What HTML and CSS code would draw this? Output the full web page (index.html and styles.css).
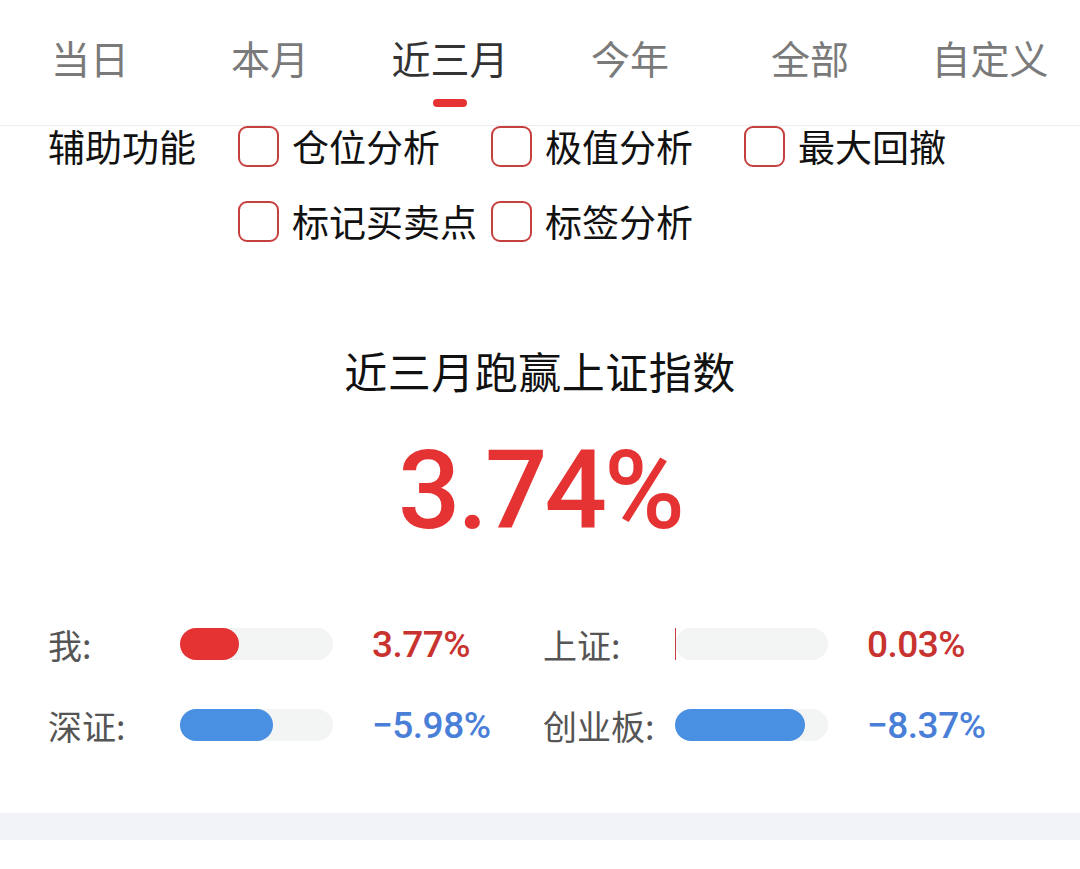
FILE: index.html
```html
<!DOCTYPE html>
<html lang="zh">
<head>
<meta charset="utf-8">
<link rel="stylesheet" href="styles.css">
</head>
<body>
<div class="page">
  <nav class="tabs">
    <div class="tab">当日</div>
    <div class="tab">本月</div>
    <div class="tab active">近三月<span class="indicator"></span></div>
    <div class="tab">今年</div>
    <div class="tab">全部</div>
    <div class="tab">自定义</div>
  </nav>

  <section class="aux">
    <div class="aux-label">辅助功能</div>
    <div class="aux-grid">
      <label class="opt"><span class="box"></span>仓位分析</label>
      <label class="opt"><span class="box"></span>极值分析</label>
      <label class="opt"><span class="box"></span>最大回撤</label>
      <label class="opt"><span class="box"></span>标记买卖点</label>
      <label class="opt"><span class="box"></span>标签分析</label>
    </div>
  </section>

  <section class="summary">
    <div class="summary-title">近三月跑赢上证指数</div>
    <div class="summary-value">3.74%</div>
  </section>

  <section class="stats">
    <div class="stat">
      <span class="stat-label">我:</span>
      <span class="track"><span class="fill up" style="width:59px"></span></span>
      <span class="stat-value up">3.77%</span>
    </div>
    <div class="stat">
      <span class="stat-label">上证:</span>
      <span class="track"><span class="fill up thin" style="width:1px"></span></span>
      <span class="stat-value up">0.03%</span>
    </div>
    <div class="stat">
      <span class="stat-label">深证:</span>
      <span class="track"><span class="fill down" style="width:93px"></span></span>
      <span class="stat-value down">−5.98%</span>
    </div>
    <div class="stat">
      <span class="stat-label">创业板:</span>
      <span class="track"><span class="fill down" style="width:130px"></span></span>
      <span class="stat-value down">−8.37%</span>
    </div>
  </section>

  <div class="band"></div>
</div>
</body>
</html>
```

FILE: styles.css
```css
* { box-sizing: border-box; }
html, body { margin: 0; padding: 0; background: #fff; }
body {
  font-family: "Noto Sans CJK SC", "Noto Sans", sans-serif;
  width: 1080px;
  height: 869px;
  overflow: hidden;
}
.page { display: flex; flex-direction: column; }

.tabs {
  display: grid;
  grid-template-columns: repeat(6, 180px);
  height: 126px;
  border-bottom: 1px solid #eeeeee;
}
.tab {
  display: flex;
  flex-direction: column;
  align-items: center;
  padding-top: 35px;
  font-size: 39px;
  line-height: 44px;
  color: #7a7a7a;
}
.tab.active { color: #333; }
.indicator {
  display: block;
  width: 34px;
  height: 8px;
  border-radius: 4px;
  background: #e53333;
  margin-top: 20px;
}

.aux {
  display: flex;
  padding: 0 0 0 48px;
  height: 214px;
}
.aux-label {
  width: 190px;
  font-size: 37px;
  line-height: 40px;
  color: #111;
}
.aux-grid {
  display: grid;
  grid-template-columns: repeat(3, 253px);
  row-gap: 35px;
  align-content: start;
}
.opt {
  display: flex;
  align-items: center;
  gap: 13px;
  height: 40px;
  font-size: 37px;
  color: #111;
  white-space: nowrap;
}
.box {
  width: 41px;
  height: 41px;
  border: 2px solid #c6403f;
  border-radius: 9px;
  flex: none;
}

.summary {
  display: flex;
  flex-direction: column;
  align-items: center;
}
.summary-title {
  font-size: 43px;
  line-height: 60px;
  color: #111;
  letter-spacing: 0.5px;
}
.summary-value {
  margin-top: 26px;
  font-family: Roboto, "Liberation Sans", sans-serif;
  font-weight: 500;
  font-size: 110px;
  line-height: 130px;
  color: #e53333;
  letter-spacing: -3px;
}

.stats {
  display: grid;
  grid-template-columns: 495px 495px;
  row-gap: 49px;
  padding: 72px 0 0 48px;
}
.stat {
  display: flex;
  align-items: center;
  height: 32px;
}
.stat-label {
  width: 132px;
  font-size: 34px;
  color: #555;
}
.track {
  width: 153px;
  height: 32px;
  border-radius: 16px;
  background: #f3f4f4;
  display: flex;
  flex: none;
}
.fill { height: 100%; border-radius: 16px; }
.fill.up { background: #e53333; }
.fill.down { background: #4a90e2; }
.fill.thin { border-radius: 0; background: #c6403f; }
.stat-value {
  margin-left: 39px;
  font-family: Roboto, "Liberation Sans", sans-serif;
  font-weight: 500;
  font-size: 37px;
  letter-spacing: -0.5px;
}
.stat-value.up { color: #c8322f; }
.stat-value.down { color: #4a7fd8; }

.band {
  margin-top: 72px;
  height: 27px;
  background: #f2f3f7;
}
```
